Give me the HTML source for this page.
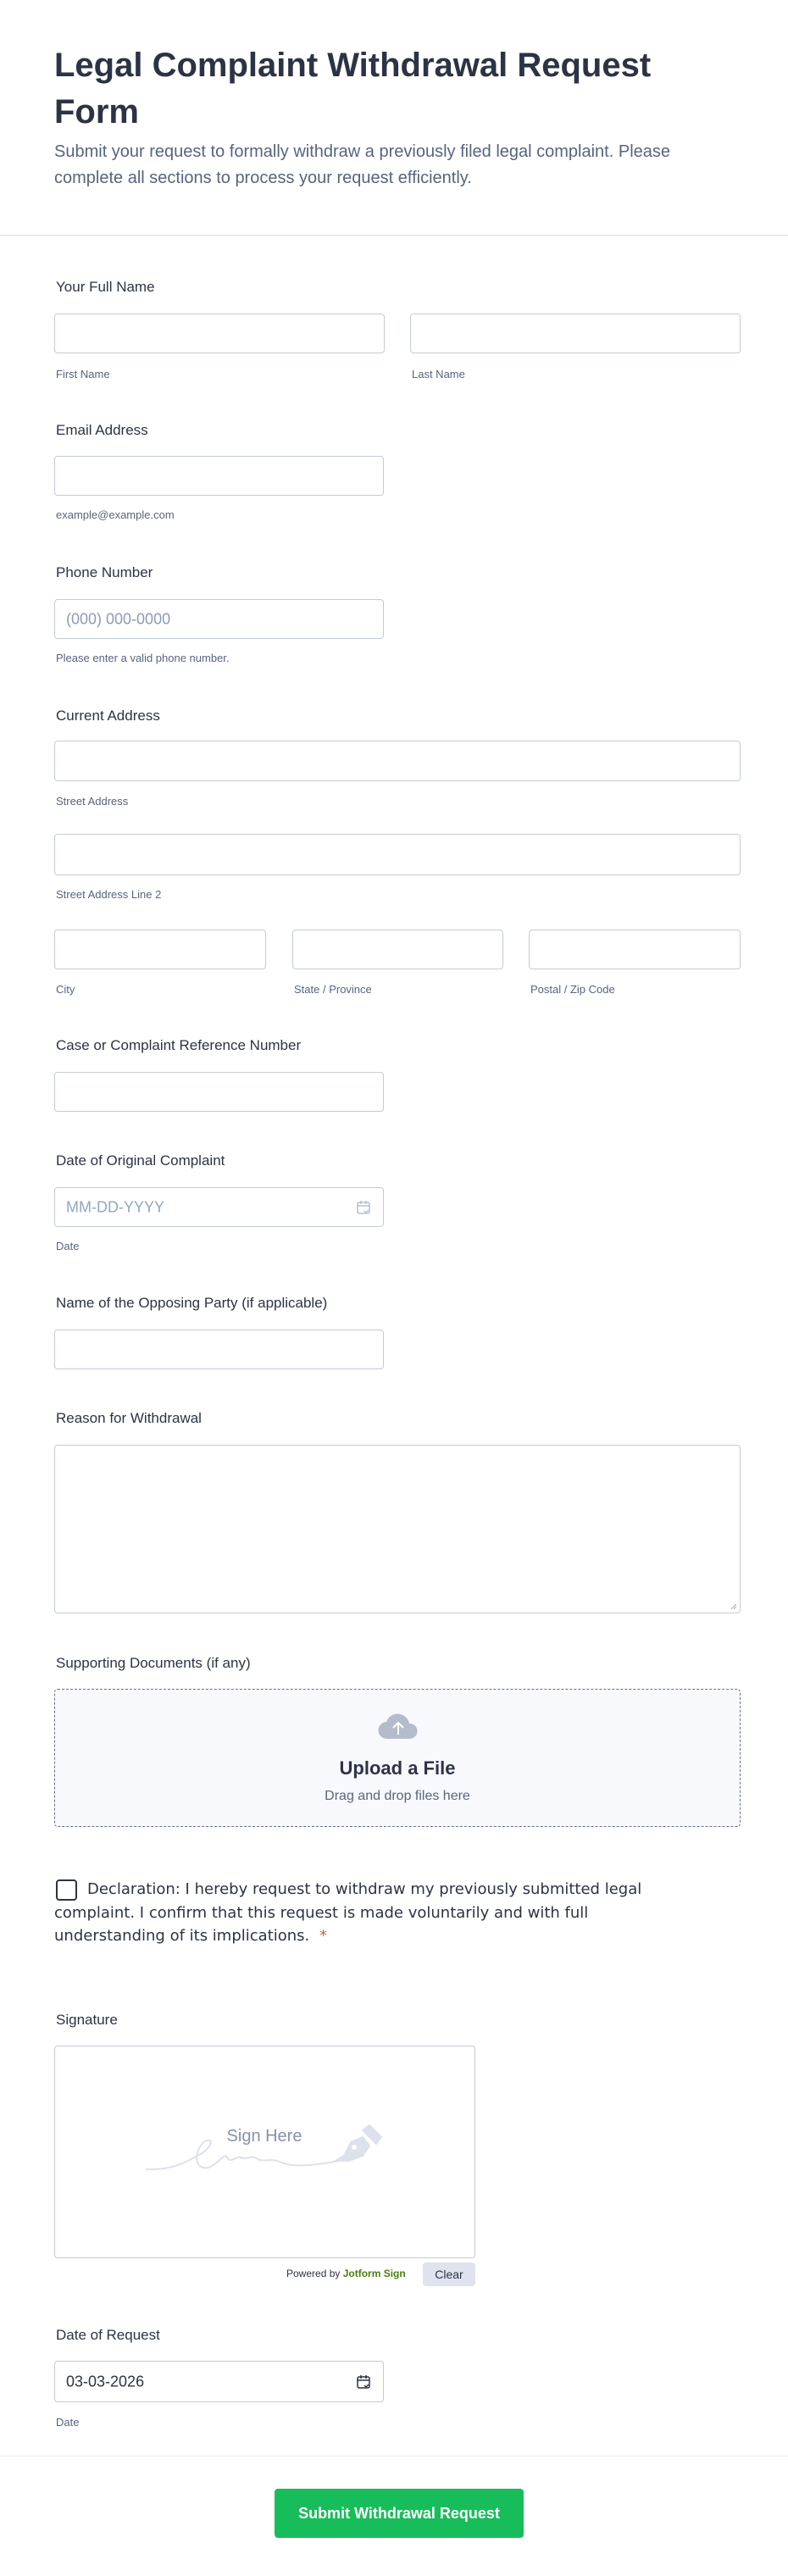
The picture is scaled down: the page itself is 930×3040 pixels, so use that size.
<!DOCTYPE html>
<html><head><meta charset="utf-8"><style>
*{box-sizing:border-box;margin:0;padding:0}
body{width:930px;height:3040px;background:#fff;font-family:"Liberation Sans",sans-serif;color:#2c3345;position:relative;overflow:hidden}
.a{position:absolute}
.lbl{position:absolute;left:66px;font-size:17px;color:#2c3345;line-height:20px}
.sub{position:absolute;font-size:13px;color:#57647e;line-height:16px}
.in{position:absolute;border:1px solid #c3cad8;border-radius:4px;background:#fff}
.ph{position:absolute;left:13px;top:50%;transform:translateY(-50%);font-size:18px;color:#8f9bb3}
</style></head><body>
<div class="a" style="left:64px;top:50px;width:760px;font-size:40px;font-weight:bold;line-height:55px;color:#2c3345">Legal Complaint Withdrawal Request Form</div>
<div class="a" style="left:64px;top:164px;width:790px;font-size:20px;line-height:31px;color:#57647e">Submit your request to formally withdraw a previously filed legal complaint. Please complete all sections to process your request efficiently.</div>
<div class="a" style="left:0;top:277px;width:930px;height:1px;background:#d8dde9"></div>

<div class="lbl" style="top:329px">Your Full Name</div>
<div class="in" style="left:64px;top:370px;width:390px;height:47px"></div>
<div class="in" style="left:484px;top:370px;width:390px;height:47px"></div>
<div class="sub" style="left:66px;top:434px">First Name</div>
<div class="sub" style="left:486px;top:434px">Last Name</div>

<div class="lbl" style="top:498px">Email Address</div>
<div class="in" style="left:64px;top:538px;width:389px;height:47px"></div>
<div class="sub" style="left:66px;top:600px">example@example.com</div>

<div class="lbl" style="top:666px">Phone Number</div>
<div class="in" style="left:64px;top:707px;width:389px;height:47px"><span class="ph">(000) 000-0000</span></div>
<div class="sub" style="left:66px;top:769px">Please enter a valid phone number.</div>

<div class="lbl" style="top:835px">Current Address</div>
<div class="in" style="left:64px;top:874px;width:810px;height:48px"></div>
<div class="sub" style="left:66px;top:938px">Street Address</div>
<div class="in" style="left:64px;top:984px;width:810px;height:49px"></div>
<div class="sub" style="left:66px;top:1048px">Street Address Line 2</div>
<div class="in" style="left:64px;top:1097px;width:250px;height:47px"></div>
<div class="in" style="left:345px;top:1097px;width:249px;height:47px"></div>
<div class="in" style="left:624px;top:1097px;width:250px;height:47px"></div>
<div class="sub" style="left:66px;top:1160px">City</div>
<div class="sub" style="left:347px;top:1160px">State / Province</div>
<div class="sub" style="left:626px;top:1160px">Postal / Zip Code</div>

<div class="lbl" style="top:1224px">Case or Complaint Reference Number</div>
<div class="in" style="left:64px;top:1265px;width:389px;height:47px"></div>

<div class="lbl" style="top:1360px">Date of Original Complaint</div>
<div class="in" style="left:64px;top:1401px;width:389px;height:47px"><span class="ph" style="color:#8fa6c4">MM-DD-YYYY</span>
<svg class="a" style="right:14px;top:14px" width="18" height="18" viewBox="0 0 18 18" fill="none" stroke="#b8bfcc" stroke-width="1.5"><rect x="2" y="3" width="14" height="13" rx="2"/><path d="M2 7h14M6 1v4M12 1v4M10 13l2 2 3-3"/></svg></div>
<div class="sub" style="left:66px;top:1463px">Date</div>

<div class="lbl" style="top:1528px">Name of the Opposing Party (if applicable)</div>
<div class="in" style="left:64px;top:1569px;width:389px;height:47px"></div>

<div class="lbl" style="top:1664px">Reason for Withdrawal</div>
<div class="in" style="left:64px;top:1705px;width:810px;height:199px"><svg class="a" style="right:3px;bottom:3px" width="8" height="8"><path d="M7 1L1 7M7 4L4 7" stroke="#aab" /></svg></div>

<div class="lbl" style="top:1953px">Supporting Documents (if any)</div>
<div class="a" style="left:64px;top:1993px;width:810px;height:163px;border:1px dashed #6b7280;border-radius:4px;background:#f8f9fd"></div>
<svg class="a" style="left:445px;top:2022px" width="50" height="32" viewBox="0 0 50 32"><path d="M12 30a10 10 0 0 1-1-20 14 14 0 0 1 27 2 9 9 0 0 1 1 18z" fill="#b4bccc"/><path d="M25 25V11M19 17l6-6 6 6" stroke="#fff" stroke-width="2" fill="none"/></svg>
<div class="a" style="left:64px;top:2074px;width:810px;text-align:center;font-size:22px;font-weight:bold;color:#2c3345">Upload a File</div>
<div class="a" style="left:64px;top:2111px;width:810px;text-align:center;font-size:16px;color:#57647e">Drag and drop files here</div>

<div class="a" style="left:66px;top:2218px;width:25px;height:25px;border:2px solid #2c3345;border-radius:4px"></div>
<div class="a" style="left:64px;top:2216px;width:740px;font-family:'DejaVu Sans',sans-serif;font-size:18px;line-height:27.5px;color:#2c3345;text-indent:39px">Declaration: I hereby request to withdraw my previously submitted legal complaint. I confirm that this request is made voluntarily and with full understanding of its implications. <span style="color:#c0663b;margin-left:6px">*</span></div>

<div class="lbl" style="top:2374px">Signature</div>
<div class="in" style="left:64px;top:2414px;width:497px;height:251px;border-color:#c3cad8"></div>
<div class="a" style="left:262px;top:2510px;width:100px;text-align:center;font-size:20px;color:#8792ab">Sign Here</div>
<svg class="a" style="left:160px;top:2500px" width="300" height="70" viewBox="0 0 300 70" fill="none" stroke="#dde1ec" stroke-width="2"><path d="M12 60C40 62 60 52 80 40 C90 32 92 24 84 26 C70 32 66 62 86 58 C98 54 104 40 108 46 C112 54 118 44 124 46 C130 50 136 42 144 48 C150 52 160 46 172 52 C186 58 210 56 240 50"/><path d="M236 50l10-6 8-16 14-6 8 10-8 12-16 6z" fill="#dde1ec"/><path d="M268 14l8-6 14 14-6 8z" fill="#dde1ec"/><circle cx="258" cy="34" r="3" fill="#fff" stroke="none"/></svg>
<div class="a" style="left:338px;top:2676px;font-size:12px;color:#2c3345">Powered by <b style="color:#4d7c0f">Jotform Sign</b></div>
<div class="a" style="left:499px;top:2670px;width:62px;height:28px;background:#dfe3ee;border-radius:4px;font-size:14px;color:#2c3345;text-align:center;line-height:28px">Clear</div>

<div class="lbl" style="top:2746px">Date of Request</div>
<div class="in" style="left:64px;top:2786px;width:389px;height:49px"><span class="ph" style="color:#2c3345">03-03-2026</span>
<svg class="a" style="right:14px;top:15px" width="18" height="18" viewBox="0 0 18 18" fill="none" stroke="#2c3345" stroke-width="1.5"><rect x="2" y="3" width="14" height="13" rx="2"/><path d="M2 7h14M6 1v4M12 1v4M10 13l2 2 3-3"/></svg></div>
<div class="sub" style="left:66px;top:2851px">Date</div>

<div class="a" style="left:0;top:2898px;width:930px;height:1px;background:#eceef3"></div>
<div class="a" style="left:324px;top:2937px;width:294px;height:58px;background:#18bd5b;border-radius:4px;color:#fff;font-size:18px;font-weight:bold;text-align:center;line-height:58px">Submit Withdrawal Request</div>
</body></html>
